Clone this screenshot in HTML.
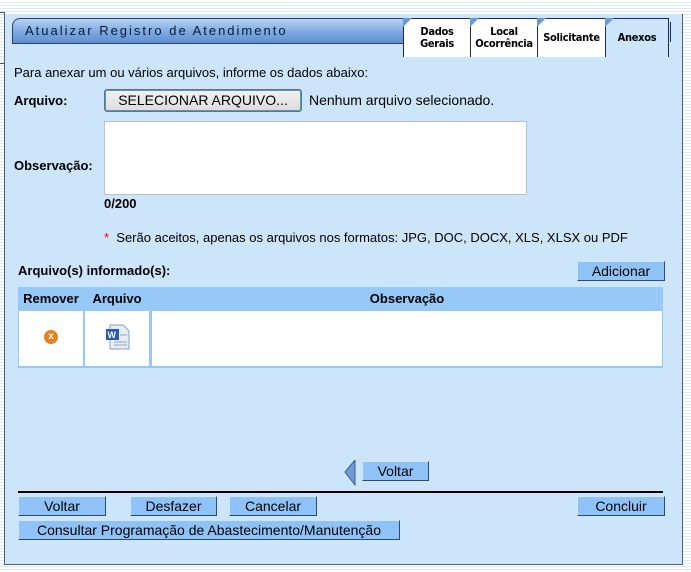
<!DOCTYPE html>
<html><head><meta charset="utf-8"><style>
body{margin:0;width:691px;height:572px;overflow:hidden;font-family:"Liberation Sans",Arial,sans-serif;font-size:13px;color:#000;
background:repeating-linear-gradient(#fff 0,#fff 2px,#dbe8f6 2px,#dbe8f6 3px);position:relative}
.abs{position:absolute}
.panel{left:4px;top:14px;width:677px;height:550px;background:#cce5fb;border:1px solid #4e5d73;border-top:none}
.hdr{left:12px;top:18px;width:420px;height:24px;background:linear-gradient(#b7d4f4,#7ca8e0 55%,#5f8fd3);border:1px solid #2c3f6a;border-radius:8px 0 0 0;font-size:13px;letter-spacing:2px;color:#0a1a3a}
.tab{top:18px;height:38px;background:#fff;border:1px solid #1c2a55;border-bottom:none;font-weight:bold;font-size:11px;text-align:center;line-height:12px;display:flex;align-items:center;justify-content:center;font-family:"DejaVu Sans Condensed","Liberation Sans",sans-serif;letter-spacing:-0.3px}
.tab:before{content:"";position:absolute;left:-1px;top:-1px;border-top:9px solid #6b98d6;border-right:9px solid transparent}
.btn{background:#8fc3f7;border:1px solid #2b4a7a;border-top-color:#d0e6ff;border-left-color:#d0e6ff;text-align:center;font-size:14px;line-height:18px;height:18px}
</style></head><body>
<div class="abs" style="left:0;top:12px;width:4px;height:50px;border:1px solid #4e5d73;border-left:none"></div>
<div class="abs panel"></div>
<div class="abs hdr"><span style="position:absolute;left:12px;top:4px">Atualizar Registro de Atendimento</span></div>
<div class="abs tab" style="left:403px;width:66px">Dados<br>Gerais</div>
<div class="abs tab" style="left:470px;width:66px">Local<br>Ocorrência</div>
<div class="abs tab" style="left:537px;width:67px">Solicitante</div>
<div class="abs tab" style="left:605px;width:62px;background:#cce5fb">Anexos</div>
<div class="abs" style="left:667px;top:22px;width:3px;height:20px;border-right:1px solid #1c2a55"></div>

<div class="abs" style="left:14px;top:65px">Para anexar um ou vários arquivos, informe os dados abaixo:</div>
<div class="abs" style="left:14px;top:93px;font-weight:bold">Arquivo:</div>
<div class="abs" style="left:104px;top:89px;width:196px;height:21px;background:linear-gradient(#f2f2f2,#dcdcdc);border:1px solid #707070;border-radius:3px;font-size:14px;line-height:21px;text-align:center;box-shadow:inset 0 0 0 1px #3c9fd8;white-space:nowrap;overflow:hidden">SELECIONAR ARQUIVO...</div>
<div class="abs" style="left:309px;top:92px;font-size:14px">Nenhum arquivo selecionado.</div>
<div class="abs" style="left:14px;top:158px;font-weight:bold">Observação:</div>
<div class="abs" style="left:104px;top:121px;width:421px;height:72px;background:#fff;border:1px solid #b8c0c8"></div>
<div class="abs" style="left:104px;top:196px;font-weight:bold">0/200</div>
<div class="abs" style="left:104px;top:230px"><span style="color:#e00">*</span>&nbsp; Serão aceitos, apenas os arquivos nos formatos: JPG, DOC, DOCX, XLS, XLSX ou PDF</div>

<div class="abs" style="left:18px;top:263px;font-weight:bold">Arquivo(s) informado(s):</div>
<div class="abs btn" style="left:577px;top:261px;width:86px">Adicionar</div>
<div class="abs" style="left:18px;top:287px;width:645px;height:81px;background:#96c8f8">
 <div class="abs" style="left:0;top:4px;width:66px;text-align:center;font-weight:bold">Remover</div>
 <div class="abs" style="left:67px;top:4px;width:64px;text-align:center;font-weight:bold">Arquivo</div>
 <div class="abs" style="left:133px;top:4px;width:512px;text-align:center;font-weight:bold">Observação</div>
 <div class="abs" style="left:1px;top:24px;width:64px;height:55px;background:#fff"></div>
 <div class="abs" style="left:67px;top:24px;width:64px;height:55px;background:#fff"></div>
 <div class="abs" style="left:134px;top:24px;width:510px;height:55px;background:#fff"></div>
 <div class="abs" style="left:26px;top:43px;width:14px;height:14px;border-radius:50%;background:#e8801c;color:#fff;font-size:10px;font-weight:bold;text-align:center;line-height:14px">x</div>
 <svg class="abs" style="left:86px;top:36px" width="28" height="28"><path d="M6 2h13l6 6v18H6z" fill="#e8eef8" stroke="#8a9cb8"/><rect x="2" y="6" width="13" height="11" fill="#2a58b0"/><text x="3.5" y="15" font-size="9" fill="#fff" font-family="Liberation Sans" font-weight="bold">W</text><path d="M16 12h7M10 19h13M10 22h13" stroke="#8aa0c8"/></svg>
</div>

<svg class="abs" style="left:344px;top:460px" width="12" height="26"><path d="M11 0L1 12l10 13z" fill="#6d9bd8" stroke="#3b5c90"/></svg>
<div class="abs btn" style="left:362px;top:461px;width:65px">Voltar</div>
<div class="abs" style="left:18px;top:491px;width:645px;height:2px;background:#000"></div>
<div class="abs btn" style="left:18px;top:496px;width:86px">Voltar</div>
<div class="abs btn" style="left:130px;top:496px;width:85px">Desfazer</div>
<div class="abs btn" style="left:229px;top:496px;width:86px">Cancelar</div>
<div class="abs btn" style="left:577px;top:496px;width:86px">Concluir</div>
<div class="abs btn" style="left:18px;top:520px;width:380px">Consultar Programação de Abastecimento/Manutenção</div>
</body></html>
